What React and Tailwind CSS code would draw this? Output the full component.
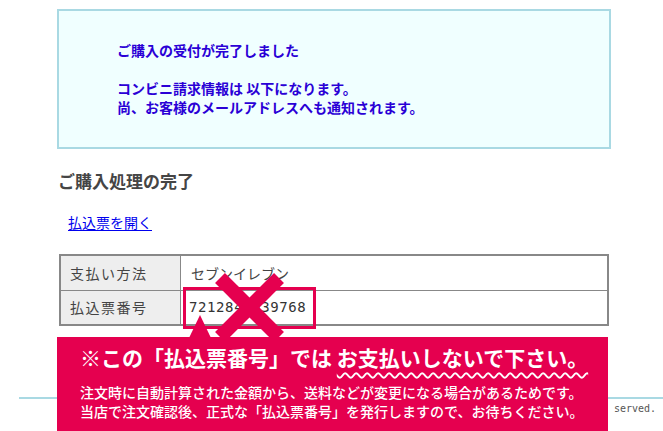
import React from "react";

const JP = { fontFamily: '"Noto Sans CJK JP", "Noto Sans", sans-serif' };

export default function App() {
  return (
    <div className="relative w-[663px] h-[431px] overflow-hidden bg-white" style={JP}>
      <div className="pt-[9px] pl-[57px]">
        <div className="w-[554px] h-[140px] border-2 border-[#a9d9e3] bg-[#f0ffff] pl-[58px] pt-[30px] text-[14px] leading-[19px] font-bold text-[#2a00d6]">
          <p>ご購入の受付が完了しました</p>
          <p className="h-[19px]"></p>
          <p>コンビニ請求情報は 以下になります。</p>
          <p>尚、お客様のメールアドレスへも通知されます。</p>
        </div>

        <h2 className="mt-[20px] ml-[1px] text-[17px] leading-[24px] font-bold text-[#454545]">
          ご購入処理の完了
        </h2>

        <div className="mt-[19px] ml-[11px] text-[14px] leading-[20px]">
          <a href="#" className="text-[#0000ee] underline underline-offset-2">
            払込票を開く
          </a>
        </div>

        <div className="relative mt-[22px] ml-[2px] w-[550px] border-2 border-[#888] text-[14px] text-[#444]">
          <div className="flex h-[34px]">
            <div className="w-[120px] bg-[#eeeeee] border-r border-[#888] flex items-center pl-[9px] tracking-[1.5px]">
              支払い方法
            </div>
            <div className="flex-1 flex items-center pl-[10px]">セブンイレブン</div>
          </div>
          <div className="flex h-[34px] border-t border-[#888]">
            <div className="w-[120px] bg-[#eeeeee] border-r border-[#888] flex items-center pl-[9px] tracking-[1.5px]">
              払込票番号
            </div>
            <div
              className="flex-1 flex items-center pl-[8px] text-[14px] tracking-[0.6px] text-[#333]"
              style={{ fontFamily: '"DejaVu Sans Mono", monospace' }}
            >
              7212845539768
            </div>
          </div>
        </div>
      </div>

      {/* footer */}
      <div className="absolute left-[19px] right-0 top-[397px] h-[2px] bg-[#a9d9e3]"></div>
      <div
        className="absolute left-[614px] top-[403px] text-[10px] leading-[12px] text-[#555]"
        style={{ fontFamily: '"DejaVu Sans Mono", monospace' }}
      >
        served.
      </div>

      {/* pink overlay: box around number */}
      <div className="absolute left-[183px] top-[287px] w-[133px] h-[42px] border-[3px] border-[#e5004f]"></div>

      {/* X mark and pointer */}
      <svg className="absolute left-0 top-0" width="663" height="431" viewBox="0 0 663 431">
        <g stroke="#e5004f" strokeWidth="14" strokeLinecap="butt">
          <line x1="220" y1="278" x2="279" y2="337" />
          <line x1="279" y1="278" x2="220" y2="337" />
        </g>
        <polygon points="200,315 189,338 211,338" fill="#e5004f" />
      </svg>

      {/* banner */}
      <div className="absolute left-[57px] top-[337px] w-[551px] h-[100px] bg-[#e5004f] text-white pl-[23px] pt-[6px]">
        <div className="text-[21px] leading-[28px] font-bold whitespace-nowrap">
          ※この「払込票番号」では{" "}
          <span className="underline decoration-wavy decoration-[1.5px] underline-offset-[6px]">
            お支払いしないで下さい。
          </span>
        </div>
        <div className="mt-[12px] text-[14px] leading-[19px] font-medium whitespace-nowrap">
          <p>注文時に自動計算された金額から、送料などが変更になる場合があるためです。</p>
          <p>当店で注文確認後、正式な「払込票番号」を発行しますので、お待ちください。</p>
        </div>
      </div>
    </div>
  );
}
